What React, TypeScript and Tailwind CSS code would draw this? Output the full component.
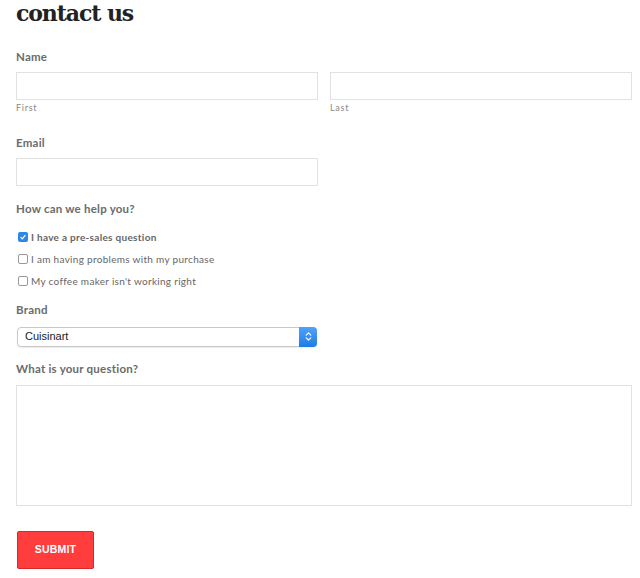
import { ChevronsUpDown } from "lucide-react";

const helpOptions = [
  { label: "I have a pre-sales question", checked: true },
  { label: "I am having problems with my purchase", checked: false },
  { label: "My coffee maker isn't working right", checked: false },
];

function Label({ children }: { children: string }) {
  return <p className="text-[11.5px] font-bold tracking-[0.02em] text-[#6b6b6b]">{children}</p>;
}

export default function App() {
  return (
    <div className="h-[578px] w-[640px] overflow-hidden bg-white pl-4 pr-2 font-['Lato','Liberation_Sans',sans-serif]">
      <h1 className="-mt-[2px] font-['DejaVu_Serif',serif] text-[22px] font-bold leading-[30px] tracking-[-0.05em] text-[#222]">
        contact us
      </h1>

      <div className="mt-[20px]">
        <Label>Name</Label>
        <div className="mt-[7px] grid grid-cols-2 gap-3">
          <div>
            <div className="h-[28px] border border-[#e2e2e2] bg-white" />
            <p className="mt-[1px] text-[9px] tracking-[0.08em] text-[#888]">First</p>
          </div>
          <div>
            <div className="h-[28px] border border-[#e2e2e2] bg-white" />
            <p className="mt-[1px] text-[9px] tracking-[0.08em] text-[#888]">Last</p>
          </div>
        </div>
      </div>

      <div className="mt-[19px]">
        <Label>Email</Label>
        <div className="mt-[7px] h-[28px] w-[302px] border border-[#e2e2e2] bg-white" />
      </div>

      <div className="mt-[14px]">
        <Label>How can we help you?</Label>
        <div className="mt-[13px] flex flex-col gap-[8px]">
          {helpOptions.map((o) => (
            <div key={o.label} className="flex h-[14px] items-center gap-[3px]">
              {o.checked ? (
                <span className="ml-[2px] flex h-[10px] w-[10px] items-center justify-center rounded-[2px] bg-[#2f86e6]">
                  <svg viewBox="0 0 10 10" className="h-[8px] w-[8px]">
                    <path d="M2 5.2 L4.2 7.3 L8 2.6" fill="none" stroke="#fff" strokeWidth="1.6" />
                  </svg>
                </span>
              ) : (
                <span className="ml-[2px] h-[10px] w-[10px] rounded-[2px] border border-[#999] bg-white" />
              )}
              <span className={`text-[10px] tracking-[0.03em] text-[#666] ${o.checked ? "font-bold" : ""}`}>
                {o.label}
              </span>
            </div>
          ))}
        </div>
      </div>

      <div className="mt-[13px]">
        <Label>Brand</Label>
        <div className="ml-[1px] mt-[8px] flex h-[20px] w-[300px] items-center justify-between rounded-[4px] border border-[#c8c8c8] bg-white pl-[7px] shadow-[0_1px_1px_rgba(0,0,0,0.08)]">
          <span className="font-['Liberation_Sans',sans-serif] text-[11px] text-[#222]">Cuisinart</span>
          <span className="-mr-px flex h-[20px] w-[18px] items-center justify-center rounded-r-[4px] bg-gradient-to-b from-[#4ea3f8] to-[#1f7ae8]">
            <ChevronsUpDown size={11} color="#fff" strokeWidth={2.5} />
          </span>
        </div>
      </div>

      <div className="mt-[13px]">
        <Label>What is your question?</Label>
        <div className="mt-[8px] h-[121px] w-[616px] border border-[#e2e2e2] bg-white" />
      </div>

      <button className="ml-[1px] mt-[25px] h-[38px] w-[77px] rounded-[2px] border border-[#d62828] bg-[#ff3d3d] font-['Liberation_Sans',sans-serif] text-[10.5px] font-bold tracking-[0.02em] text-white">
        SUBMIT
      </button>
    </div>
  );
}
